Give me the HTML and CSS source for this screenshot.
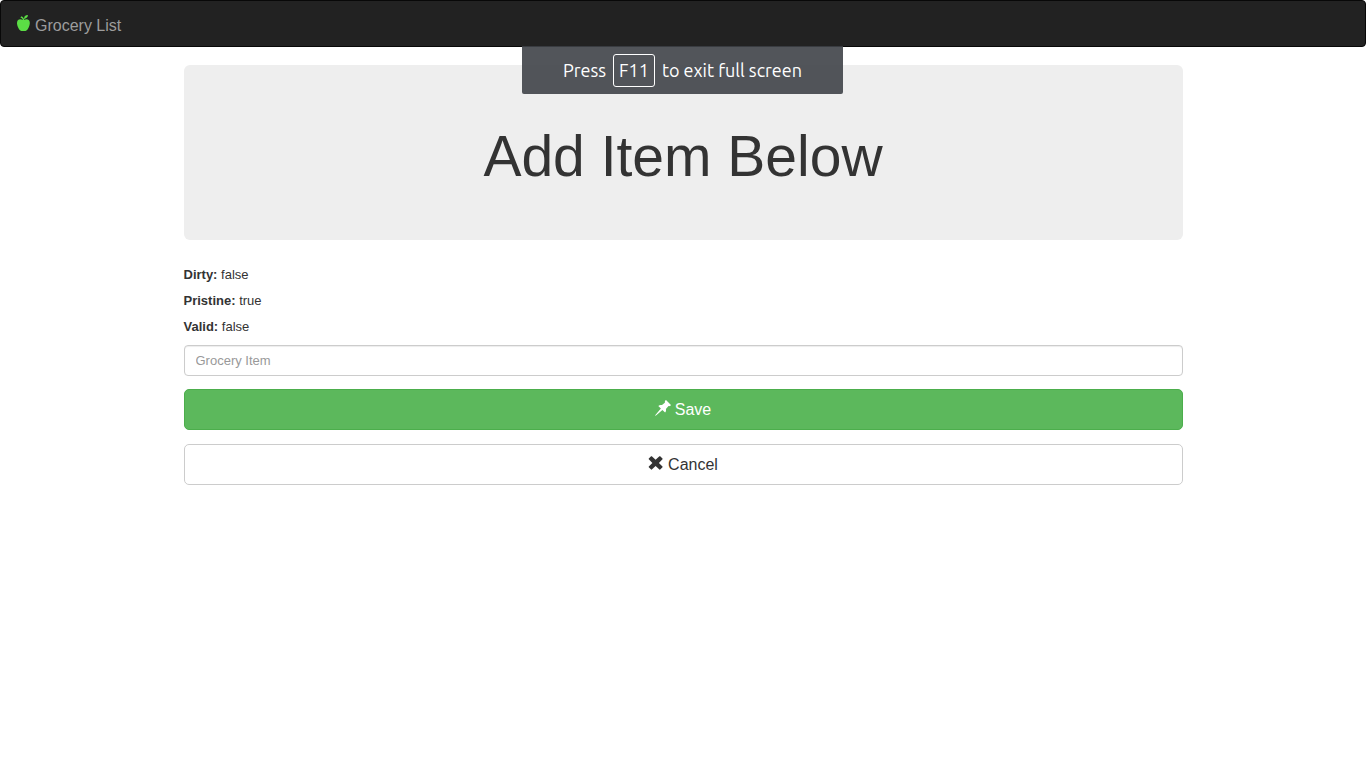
FILE: index.html
```
<!DOCTYPE html>
<html lang="en">
<head>
  <meta charset="utf-8">
  <meta name="viewport" content="width=device-width, initial-scale=1">
  <title>Grocery List</title>
  <link rel="stylesheet" href="styles.css">
</head>
<body>
  <nav class="navbar">
    <a class="brand" href="#">
      <svg class="icon apple" viewBox="0 0 16 16" aria-hidden="true">
        <path d="M8 5.1C7.9 4 7.1 3.1 5.3 2.4L6.6 1.2C7.7 1.8 8.3 2.5 8.6 3.4L9.2 3.2C8.9 1.5 10.4 0.2 12.9 0C13 2 11.5 3.4 9.3 3.9L8.9 5.1C10.6 4 12.8 4 14 5.3C15.4 7 14.8 10 13.9 12.1C12.9 14.4 11.9 16 10.5 16H6.3C4.9 16 3.9 14.4 2.9 12.1C2 10 1.5 7 2.8 5.3C4 4 6.3 4 8 5.1Z"/>
      </svg>
      <span>Grocery List</span>
    </a>
  </nav>

  <div class="notice" role="status">
    <span>Press</span>
    <kbd class="key">F11</kbd>
    <span>to exit full screen</span>
  </div>

  <main class="container">
    <header class="jumbotron">
      <h1 class="title">Add Item Below</h1>
    </header>
    <form class="item-form">
      <div class="states">
        <p class="state"><strong>Dirty:</strong> false</p>
        <p class="state"><strong>Pristine:</strong> true</p>
        <p class="state"><strong>Valid:</strong> false</p>
      </div>
      <input class="field" type="text" placeholder="Grocery Item" aria-label="Grocery Item">
      <button class="button save" type="submit">
        <svg class="icon" viewBox="0 0 16 16" aria-hidden="true">
          <path d="M11 0L16 5L14.9 6.2C14.3 6 13.8 6 13.3 6.3L10.9 9C11.3 10.4 11 11.7 10.1 12.6L7.4 10L1.3 15.3L0 16L0.6 14.7L5.9 8.5L3.3 5.9C4.3 5 5.6 4.7 7 5.1L9.8 2.7C10 2.1 10.1 1.6 9.8 1.1Z"/>
        </svg>
        <span>Save</span>
      </button>
      <button class="button cancel" type="button">
        <svg class="icon" viewBox="0 0 16 16" aria-hidden="true">
          <path d="M3.8 1.3L7.6 4.8L11.4 1.3Q11.8 1 12.2 1.3L14.5 3.6Q14.8 4 14.5 4.3L10.9 8L14.5 11.6Q14.8 12 14.5 12.3L12.2 14.6Q11.8 14.9 11.4 14.6L7.6 11.1L3.8 14.6Q3.5 14.9 3.1 14.6L0.8 12.3Q0.5 12 0.8 11.6L4.4 8L0.8 4.3Q0.5 4 0.8 3.6L3.1 1.3Q3.5 1 3.8 1.3Z"/>
        </svg>
        <span>Cancel</span>
      </button>
    </form>
  </main>
</body>
</html>
```

FILE: styles.css
```
* {
  box-sizing: border-box;
}

body {
  margin: 0;
  background: #fff;
  color: #333;
  font-family: "Helvetica Neue", Helvetica, "Liberation Sans", Arial, sans-serif;
  font-size: 13px;
  line-height: 18px;
}

.navbar {
  display: flex;
  min-height: 47px;
  margin-bottom: 18px;
  padding: 0 14px;
  background: #222;
  border: 1px solid #080808;
  border-radius: 4px;
}

.brand {
  display: flex;
  align-items: center;
  gap: 4px;
  padding-top: 4px;
  color: #9d9d9d;
  font-size: 16px;
  text-decoration: none;
}

.icon {
  flex: none;
  width: 16px;
  height: 16px;
  margin-bottom: 3px;
  fill: currentColor;
}

.apple {
  margin-bottom: 5px;
  color: #5bdd45;
}

.notice {
  position: absolute;
  top: 46px;
  left: calc(50% - 161px);
  display: flex;
  align-items: center;
  justify-content: center;
  gap: 7px;
  width: 321px;
  height: 48px;
  background: rgba(63, 67, 72, 0.9);
  border-radius: 0 0 2px 2px;
  color: #fff;
  font-family: Ubuntu, "Noto Sans", sans-serif;
  font-size: 18px;
  line-height: 23px;
  white-space: nowrap;
}

.key {
  padding: 4px 5px;
  border: 1px solid #fff;
  border-radius: 3px;
  font: inherit;
}

.container {
  max-width: 1027px;
  margin: 0 auto;
  padding: 0 14px;
}

.jumbotron {
  margin-bottom: 26px;
  padding: 60px 54px 52px;
  background: #eee;
  border-radius: 6px;
  text-align: center;
}

.title {
  margin: 0;
  font-size: 57px;
  font-weight: 500;
  line-height: 63px;
}

.item-form {
  display: flex;
  flex-direction: column;
}

.states {
  display: grid;
  gap: 8px;
  margin-bottom: 9px;
}

.state {
  margin: 0;
}

.field {
  width: 100%;
  height: 31px;
  margin-bottom: 13px;
  padding: 5px 11px;
  background: #fff;
  border: 1px solid #ccc;
  border-radius: 4px;
  box-shadow: inset 0 1px 1px rgba(0, 0, 0, 0.075);
  color: #555;
  font: inherit;
}

.field::placeholder {
  color: #999;
}

.button {
  display: flex;
  align-items: center;
  justify-content: center;
  gap: 4px;
  width: 100%;
  padding: 9px 14px;
  border: 1px solid;
  border-radius: 5px;
  font-family: inherit;
  font-size: 16px;
  line-height: 21px;
  cursor: pointer;
}

.save {
  margin-bottom: 14px;
  background: #5cb85c;
  border-color: #4cae4c;
  color: #fff;
}

.cancel {
  background: #fff;
  border-color: #ccc;
  color: #333;
}
```
